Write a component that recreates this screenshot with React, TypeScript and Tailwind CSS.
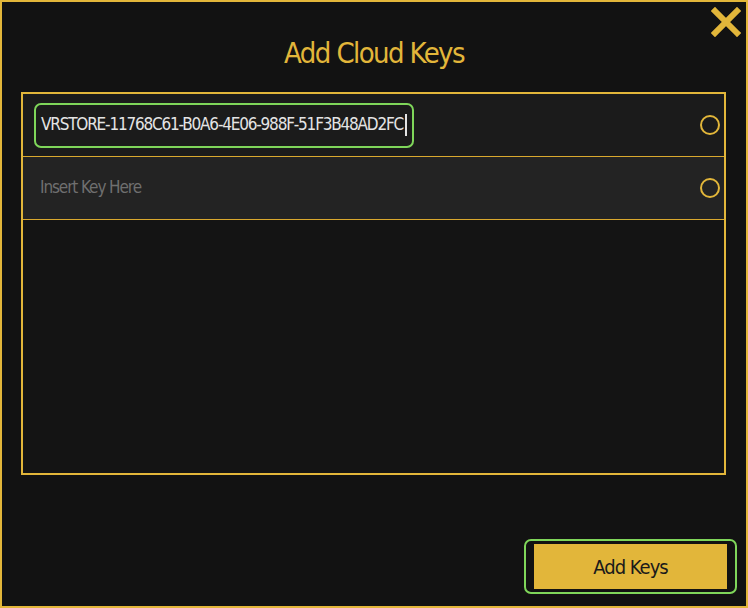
const keys = ["VRSTORE-11768C61-B0A6-4E06-988F-51F3B48AD2FC"]

const KeyRow = ({ value, active, shade }: { value?: string; active?: boolean; shade: string }) => (
  <div className={`flex items-center h-[63px] border-b border-[#d9a82e] pl-[11px] pr-[4px] ${shade}`}>
    {active ? (
      <div className="flex items-center h-[45px] w-[380px] rounded-[7px] border-2 border-[#7fd65a] pl-[5px] text-[17px] tracking-[-1.2px] text-[#e4e4e4] whitespace-nowrap">
        <span>{value}</span>
        <span className="w-[1.5px] h-[22px] bg-[#e4e4e4] ml-[2px]" />
      </div>
    ) : (
      <div className="pl-[6px] text-[17px] tracking-[-1.1px] text-[#6f6f6f]">Insert Key Here</div>
    )}
    <div className="ml-auto w-[20px] h-[20px] rounded-full border-2 border-[#e2b63a]" />
  </div>
)

export default function App() {
  return (
    <div className="relative w-[748px] h-[608px] flex flex-col border-2 border-[#e2b63a] bg-[#121212] font-['DejaVu_Sans_Condensed','DejaVu_Sans',sans-serif] font-stretch-condensed">
      <button className="absolute top-[4px] right-[4px] w-[32px] h-[32px] flex items-center justify-center">
        <svg width="30" height="30" viewBox="0 0 30 30">
          <path d="M4 4 L26 26 M26 4 L4 26" stroke="#e2b63a" strokeWidth="6" strokeLinecap="square" />
        </svg>
      </button>

      <h1 className="h-[90px] pt-[33px] text-center text-[29px] leading-[36px] tracking-[-1.6px] text-[#e2b63a]">Add Cloud Keys</h1>

      <div className="ml-[19px] mr-[20px] h-[383px] border-2 border-[#e2b63a] bg-[#141414]">
        <KeyRow value={keys[0]} active shade="bg-[#1b1b1b]" />
        <KeyRow shade="bg-[#232323]" />
      </div>

      <div className="mt-auto mb-[12px] mr-[9px] self-end rounded-[7px] border-2 border-[#7fd65a] px-[8px] py-[3px]">
        <button className="w-[193px] h-[45px] bg-[#e2b63a] text-[20px] tracking-[-1px] text-[#1a1a1a]">Add Keys</button>
      </div>
    </div>
  )
}
